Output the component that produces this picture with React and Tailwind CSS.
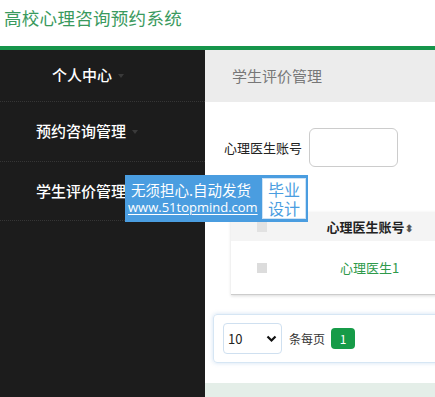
import React from "react";

const font = { fontFamily: '"Microsoft YaHei", "Noto Sans CJK SC", "Noto Sans", sans-serif' };

const menu = [
    { label: "个人中心", center: true, h: "h-[52px]" },
    { label: "预约咨询管理", h: "h-[60px]" },
    { label: "学生评价管理", h: "h-[59px]" },
];

const Caret = () => (
    <span className="ml-[6px] inline-block w-0 h-0 border-l-[3px] border-r-[3px] border-t-[4px] border-l-transparent border-r-transparent border-t-[#3a3a3a] align-middle" />
);

const App = () => {
    return (
        <div className="relative w-[435px] h-[397px] overflow-hidden bg-white flex flex-col" style={font}>

            {/* top header */}
            <header className="h-[46px] flex items-center pl-[4px] shrink-0">
                <h1 className="text-[17.5px] text-[#3a9a5e] tracking-[0.3px] -mt-[10px]">高校心理咨询预约系统</h1>
            </header>
            <div className="h-[4px] bg-[#16954b] shrink-0" />

            <div className="flex flex-1 min-h-0">
                {/* sidebar */}
                <aside className="w-[205px] bg-[#1c1c1c] shrink-0">
                    {menu.map((m, i) => (
                        <div
                            key={i}
                            className={`${m.h} flex items-center text-white text-[15px] font-medium border-b border-dotted border-[#363636] ${m.center ? "pl-[52px]" : "pl-[36px]"}`}
                        >
                            {m.label}
                            <Caret />
                        </div>
                    ))}
                </aside>

                {/* main */}
                <main className="flex-1 flex flex-col min-w-0">
                    <div className="h-[52px] bg-[#ececec] flex items-center pl-[27px] text-[15px] text-[#777] shrink-0">
                        学生评价管理
                    </div>

                    <div className="flex items-center mt-[26px] pl-[19px]">
                        <span className="text-[13px] text-[#222]">心理医生账号</span>
                        <input className="ml-[7px] w-[89px] h-[39px] border border-[#ccc] rounded-[6px] outline-none" />
                    </div>

                    {/* table */}
                    <div className="mt-[45px] ml-[26px] w-[260px] shadow-[0_1px_3px_rgba(0,0,0,0.15)] border-b border-[#ccc]">
                        <div className="h-[29px] bg-[#f4f4f4] flex items-center">
                            <div className="w-[61px] flex justify-center">
                                <span className="w-[10px] h-[10px] bg-[#e2e2e2]" />
                            </div>
                            <div className="w-[155px] text-center text-[13px] text-[#222] font-bold">
                                心理医生账号<span className="text-[10px] text-[#555]">⬍</span>
                            </div>
                        </div>
                        <div className="h-[53px] bg-white flex items-center">
                            <div className="w-[61px] flex justify-center">
                                <span className="w-[10px] h-[10px] bg-[#dcdcdc]" />
                            </div>
                            <div className="w-[155px] text-center text-[13px] text-[#2e9a4a]">心理医生1</div>
                        </div>
                    </div>

                    {/* pagination */}
                    <div className="mt-[19px] ml-[8px] w-[260px] h-[49px] border border-[#d6e6f4] rounded-[4px] shadow-[0_0_4px_rgba(120,170,220,0.35)] flex items-center pl-[9px]">
                        <div className="w-[59px] h-[31px] border border-[#cfe0f0] rounded-[4px] flex items-center justify-between px-[4px] text-[13px] text-[#222]">
                            <span>10</span>
                            <svg width="11" height="8" viewBox="0 0 11 8">
                                <path d="M1.5 1.5 L5.5 5.5 L9.5 1.5" fill="none" stroke="#111" strokeWidth="2.2" />
                            </svg>
                        </div>
                        <span className="ml-[7px] text-[12px] text-[#333]">条每页</span>
                        <span className="ml-[6px] w-[24px] h-[21px] bg-[#169b48] rounded-[4px] text-white text-[12px] flex items-center justify-center">1</span>
                    </div>

                    <div className="mt-[20px] flex-1 bg-[#e4eee8]" />
                </main>
            </div>

            {/* watermark overlay */}
            <div className="absolute left-[125px] top-[175px] w-[183px] h-[47px] bg-[#4a9de0] flex items-center pl-[3px] pr-[2px]">
                <div className="flex flex-col text-white leading-none">
                    <span className="text-[14.5px] pl-[3px]">无须担心.自动发货</span>
                    <span className="mt-[4px] text-[13px] underline underline-offset-[2px]" style={{ fontFamily: '"Open Sans", "Noto Sans", sans-serif' }}>www.51topmind.com</span>
                </div>
                <div className="ml-auto w-[44px] h-[41px] bg-white border border-[#cfe3f5] flex flex-col items-center justify-center text-[#4a9de0] text-[16px] leading-[19px]">
                    <span>毕业</span>
                    <span>设计</span>
                </div>
            </div>
        </div>
    );
};

export default App;
